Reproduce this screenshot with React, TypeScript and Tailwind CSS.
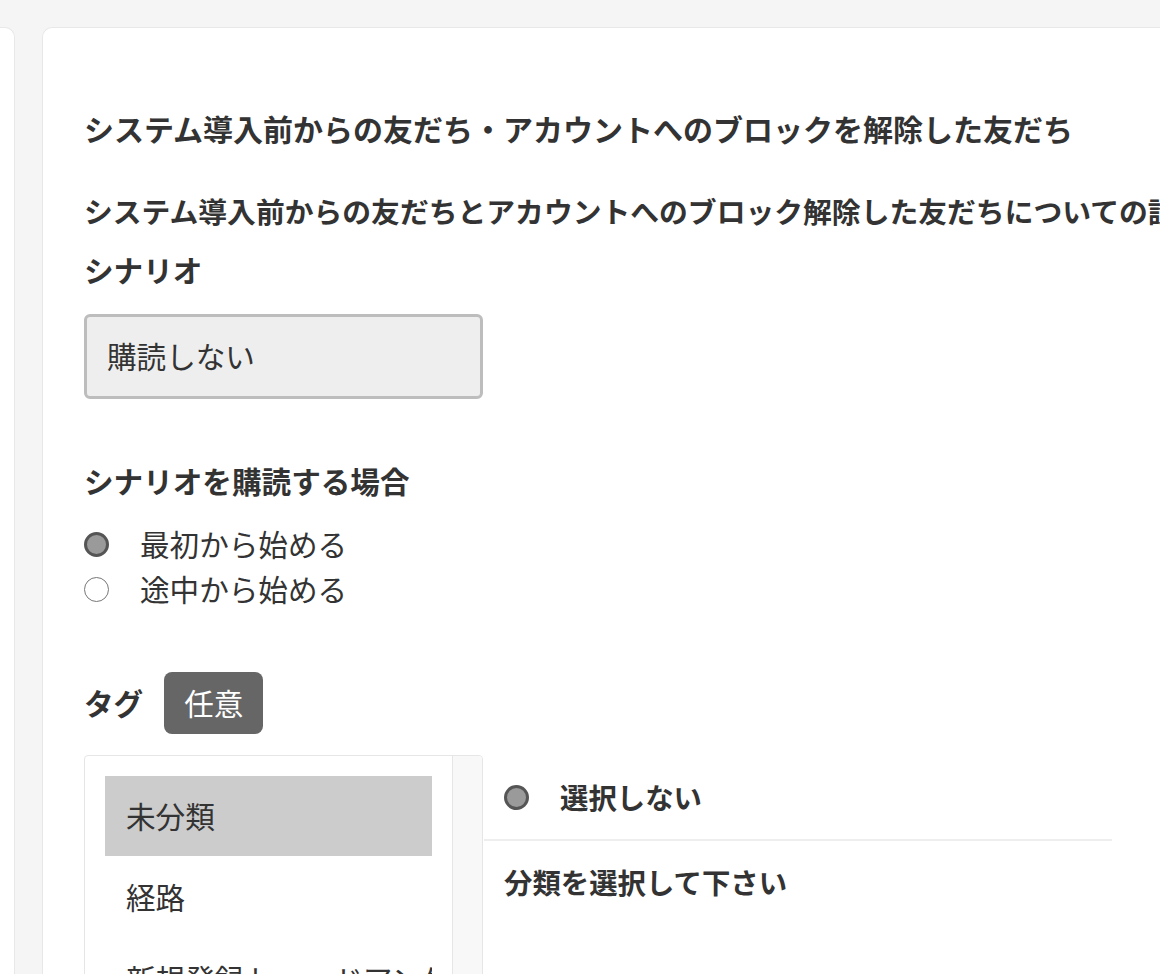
const font = { fontFamily: '"Noto Sans CJK JP", "Noto Sans", sans-serif' };

const Radio = ({ checked }: { checked?: boolean }) =>
  checked ? (
    <span className="w-[25px] h-[25px] rounded-full bg-[#9a9a9a] border-[3px] border-[#555] shrink-0" />
  ) : (
    <span className="w-[25px] h-[25px] rounded-full bg-white border-[1.5px] border-[#777] shrink-0" />
  );

const App = () => {
  return (
    <div className="w-[1160px] h-[974px] overflow-hidden bg-[#f5f5f5] flex gap-[27px] pt-[27px] text-[#333]" style={font}>
      {/* left card edge */}
      <div className="w-[15px] shrink-0 bg-white rounded-tr-[10px] border-t border-r border-[#e8e8e8]" />

      {/* main card */}
      <div className="flex-1 min-w-0 bg-white rounded-tl-[10px] border-t border-l border-[#e8e8e8] pl-[41px] pt-[78px] overflow-hidden">
        <h1 className="text-[30px] leading-[45px] font-bold whitespace-nowrap">
          システム導入前からの友だち・アカウントへのブロックを解除した友だち
        </h1>
        <h2 className="mt-[39px] text-[28.8px] leading-[42px] font-bold whitespace-nowrap">
          システム導入前からの友だちとアカウントへのブロック解除した友だちについての設定
        </h2>

        <div className="mt-[17px] text-[29.6px] leading-[42px] font-bold">シナリオ</div>
        <div className="mt-[23px] w-[399px] h-[85px] bg-[#eeeeee] border-[3px] border-[#bdbdbd] rounded-[6px] flex items-center pl-[20px] text-[29.6px]">
          購読しない
        </div>

        <div className="mt-[61px] text-[29.6px] leading-[42px] font-bold">シナリオを購読する場合</div>
        <div className="mt-[20px] flex flex-col">
          <label className="h-[45px] flex items-center gap-[31px] text-[29.6px]">
            <Radio checked />
            最初から始める
          </label>
          <label className="h-[45px] flex items-center gap-[31px] text-[29.6px]">
            <Radio />
            途中から始める
          </label>
        </div>

        <div className="mt-[60px] flex items-center gap-[21px]">
          <span className="text-[29.6px] font-bold leading-[42px]">タグ</span>
          <span className="h-[62px] px-[20px] rounded-[8px] bg-[#666] text-white text-[29.6px] flex items-center">任意</span>
        </div>

        <div className="mt-[21px] flex items-start">
          <div className="w-[399px] h-[260px] shrink-0 border border-[#e6e6e6] rounded-t-[4px] flex overflow-hidden">
            <div className="flex-1 min-w-0 p-[20px] flex flex-col overflow-hidden">
              <div className="h-[80px] shrink-0 bg-[#cccccc] flex items-center pl-[21px] text-[29.6px]">未分類</div>
              <div className="h-[82px] shrink-0 flex items-center pl-[21px] text-[29.6px]">経路</div>
              <div className="h-[82px] shrink-0 flex items-center pl-[21px] text-[29.6px] whitespace-nowrap overflow-hidden">新規登録トーードアンケート</div>
            </div>
            <div className="w-[30px] shrink-0 bg-[#f8f8f8] border-l border-[#e6e6e6]" />
          </div>
          <div className="w-[628px] shrink-0 ml-[1px]">
            <div className="h-[86px] border-b-2 border-[#eeeeee] flex items-center gap-[31px] pl-[20px]">
              <Radio checked />
              <span className="text-[28.4px] font-bold">選択しない</span>
            </div>
            <div className="pl-[20px] pt-[20px] text-[28.4px] leading-[42px] font-bold">分類を選択して下さい</div>
          </div>
        </div>
      </div>
    </div>
  );
};

export default App;
